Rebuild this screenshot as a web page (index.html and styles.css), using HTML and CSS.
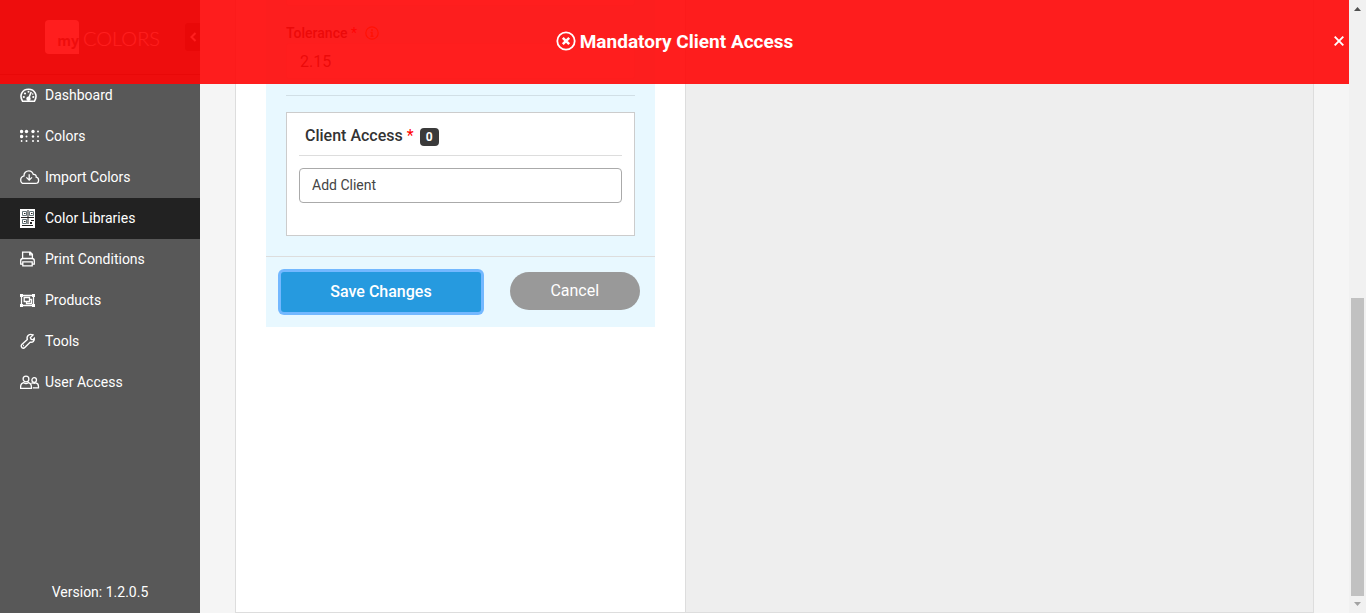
FILE: index.html
```html
<!DOCTYPE html>
<html lang="en">
<head>
<meta charset="utf-8">
<meta name="viewport" content="width=device-width, initial-scale=1">
<title>myCOLORS - Color Libraries</title>
<link rel="stylesheet" href="styles.css">
</head>
<body>
<div class="app">
  <aside class="sidebar">
    <header class="brand">
      <a class="logo" href="#"><span class="logo-box">my</span><span class="logo-name">COLORS</span></a>
      <button class="collapse" type="button" aria-label="Collapse menu">
        <svg width="8" height="10" viewBox="0 0 8 10"><path d="M6.500 1 2.500 5l4 4" fill="none" stroke="#fff" stroke-width="2"/></svg>
      </button>
    </header>
    <nav class="menu">
      <a class="item" href="#">
        <svg class="icon" viewBox="0 0 20 20"><path d="M2.500 16.200C-1 10.500 2 4.200 8.500 4.200s9.500 6.300 6 12z" fill="none" stroke="currentColor" stroke-width="1.600"/><path d="m11.200 7-2.200 5.500" stroke="currentColor" stroke-width="1.600"/><circle cx="8.500" cy="13.800" r="2.200" fill="currentColor"/><g fill="currentColor"><circle cx="8.500" cy="6.800" r="1"/><circle cx="5" cy="8.500" r="1.100"/><circle cx="3.800" cy="12" r="1.100"/><circle cx="13.300" cy="12" r="1.100"/><circle cx="12.700" cy="9" r=".8"/></g></svg>
        Dashboard</a>
      <a class="item" href="#">
        <svg class="icon" viewBox="0 0 20 20"><g fill="currentColor"><circle cx="1.600" cy="5.500" r="1.700"/><circle cx="6.500" cy="5.500" r="1.700"/><circle cx="13" cy="5.500" r="1.700"/><circle cx="18" cy="5.500" r="1"/><circle cx="1.600" cy="10.500" r="1.700"/><circle cx="6.500" cy="10.500" r="1"/><circle cx="13" cy="10.500" r="1.200"/><circle cx="18" cy="10.500" r="1"/><circle cx="1.600" cy="15" r=".9"/><circle cx="6.500" cy="15" r="1"/><circle cx="13" cy="15" r="1"/><circle cx="18" cy="15" r="1.100"/></g></svg>
        Colors</a>
      <a class="item" href="#">
        <svg class="icon" viewBox="0 0 20 20" fill="none" stroke="currentColor" stroke-width="1.300"><path d="M4 16.400h11.300c2 0 3.300-1.500 3.300-3.200 0-1.500-1-2.700-2.400-3 .3-1.700-1-3.100-2.900-2.800C12.600 5.200 11 3.900 8.800 3.900c-2.800 0-5 2-4.800 5C2 9.400.7 10.900.7 12.900c0 2 1.400 3.500 3.300 3.500zM9.200 7.200V13M6.400 10.400l2.800 2.800 2.800-2.800"/></svg>
        Import Colors</a>
      <a class="item active" href="#" aria-current="page">
        <svg class="icon" viewBox="0 0 20 20"><path d="M0 1h15v19H0z" fill="#fff"/><path d="M2.500 3.500h4v4h-4zM9.500 3.500h4v4h-4zM2.500 11.500h4v4h-4z" fill="#fff" stroke="#657579" stroke-width="1"/><path d="M4 5h1.500v1H4zM11 5h1.500v1H11zM4 13h1.500v1H4z" fill="#222"/><path d="M1 9h13v1H1zM7.500 2h1v14h-1zM2 17h11v1H2zM11 12h3v1h-3zM10 14h2v2h-2z" fill="#222"/></svg>
        Color Libraries</a>
      <a class="item" href="#">
        <svg class="icon" viewBox="0 0 20 20" fill="none" stroke="currentColor" stroke-width="1.300"><path d="M2.600 9.500V3.100h7.600l2.200 2.200v4.200M9.700 3.300v2.600h2.600M2.700 15.100H.7v-3.400c0-1.300.9-2.200 2.200-2.200h9.200c1.300 0 2.200.9 2.200 2.200v3.400h-2.200M2.800 12.900h9.400v4H2.800z"/></svg>
        Print Conditions</a>
      <a class="item" href="#">
        <svg class="icon" viewBox="0 0 20 20" fill="none" stroke="currentColor"><path d="M1.500 5.500h12v10h-12zM4.200 7.500h5.300v4H4.200zM9.500 9.500h2v4h-5v-2" stroke-width="1.300"/><path d="M0 4h3v3H0zM12 4h3v3h-3zM0 14h3v3H0zM12 14h3v3h-3z" fill="currentColor" stroke="none"/></svg>
        Products</a>
      <a class="item" href="#">
        <svg class="icon" viewBox="0 0 20 20" fill="none" stroke="currentColor" stroke-width="1.400"><path d="m13 4-2.600 2.600.8 1.800 1.800.4L14.300 7.300c.5 2.600-1.600 4.500-4.200 3.900l-5.300 5.300c-.8.800-2 .8-2.900.1-.9-.9-.9-2.200-.1-3l5.500-5C6.200 5 9.300 2.200 13 4zM3 14.500h.9"/></svg>
        Tools</a>
      <a class="item" href="#">
        <svg class="icon" viewBox="0 0 20 20" fill="none" stroke="currentColor" stroke-width="1.300"><circle cx="6" cy="7" r="2.900"/><path d="M.6 16.400v-1.500c0-2.400 1.200-3.800 3.200-4.200 1.300 1 3.100 1 4.400 0 2 .4 3.200 1.800 3.200 4.200v1.500z"/><circle cx="14.200" cy="8" r="2.300"/><path d="M11.400 11.500c.3-.3.800-.6 1.400-.7 1 .6 1.900.6 2.900 0 1.800.3 2.800 1.600 2.800 3.600v1.400h-5.700"/></svg>
        User Access</a>
    </nav>
    <footer class="version">Version: 1.2.0.5</footer>
  </aside>

  <main class="main">
    <div class="panel">
      <section class="editor">
        <form class="form">
          <div class="fields">
            <input class="text-input previous" type="text" aria-label="Library name">
            <div class="field">
              <div class="label-row">
                <label for="tolerance">Tolerance <span class="required">*</span></label>
                <svg width="14" height="14" viewBox="0 0 14 14"><circle cx="7" cy="7" r="6.200" fill="none" stroke="#ff7b00" stroke-width="1.200"/><path d="M7 3v2M5.500 6.500H7V10M5.500 10.300h3" fill="none" stroke="#ff7b00" stroke-width="1.400"/></svg>
              </div>
              <input class="text-input" id="tolerance" type="text" value="2.15">
            </div>
            <section class="clients">
              <h2 class="clients-title"><label for="client">Client Access <span class="required">*</span></label><span class="count">0</span></h2>
              <input class="client-input" id="client" type="text" placeholder="Add Client">
            </section>
          </div>
          <div class="actions">
            <button class="save" type="submit">Save Changes</button>
            <button class="cancel" type="button">Cancel</button>
          </div>
        </form>
      </section>
      <section class="preview"></section>
    </div>
  </main>

  <div class="scrollbar" aria-hidden="true">
    <svg class="arrow" width="17" height="17" viewBox="0 0 17 17"><path d="M5 11h7L8.500 7z" fill="#505050"/></svg>
    <div class="thumb"></div>
    <svg class="arrow" width="17" height="17" viewBox="0 0 17 17"><path d="M5 6h7l-3.500 4z" fill="#a3a3a3"/></svg>
  </div>

  <div class="alert" role="alert">
    <svg width="20" height="20" viewBox="0 0 20 20" fill="none" stroke="#fff"><circle cx="10" cy="10" r="8.700" stroke-width="1.800"/><path d="m6.800 6.800 6.400 6.400M13.200 6.800l-6.400 6.400" stroke-width="2.500"/></svg>
    <span>Mandatory Client Access</span>
    <button class="dismiss" type="button" aria-label="Close">
      <svg width="10" height="10" viewBox="0 0 10 10"><path d="m.7.700 8.600 8.600M9.300.700.700 9.300" stroke="#fff" stroke-width="1.900"/></svg>
    </button>
  </div>
</div>
</body>
</html>
```
FILE: styles.css
```css
* { box-sizing: border-box; }

body {
  margin: 0;
  font-family: Roboto, "Liberation Sans", sans-serif;
  font-size: 14px;
  color: #333;
  background: #f5f5f5;
}

button, input { font-family: inherit; }
button { padding: 0; border: 0; cursor: pointer; }
svg { display: block; flex: none; }

.app {
  position: relative;
  display: grid;
  grid-template-columns: 200px 1fr 17px;
  height: 100vh;
  overflow: hidden;
}

.sidebar {
  display: flex;
  flex-direction: column;
  background: #585858;
  color: #fff;
}
.brand {
  display: flex;
  align-items: center;
  justify-content: space-between;
  height: 75px;
  padding-left: 45px;
  border-bottom: 1px solid #222;
}
.logo {
  display: flex;
  align-items: center;
  gap: 4px;
  color: #fff;
  text-decoration: none;
}
.logo-box {
  width: 34px;
  height: 34px;
  padding-top: 12px;
  border-radius: 4px 4px 0 4px;
  background: #fff;
  color: #575757;
  font: 700 14px/18px "Open Sans", sans-serif;
  text-align: right;
}
.logo-name {
  padding-top: 2px;
  font: 300 20px/24px Lato, sans-serif;
}
.collapse {
  display: grid;
  place-items: center;
  width: 15px;
  height: 28px;
  border-radius: 3px 0 0 3px;
  background: #222;
}

.item {
  display: flex;
  align-items: center;
  gap: 5px;
  height: 41px;
  padding: 0 0 2px 20px;
  color: #fff;
  text-decoration: none;
}
.item.active { background: #222; }
.icon { width: 20px; height: 20px; }
.version {
  margin-top: auto;
  padding-bottom: 12px;
  line-height: 18px;
  text-align: center;
}

.main {
  display: flex;
  padding: 0 35px;
}
.panel {
  flex: 1;
  display: grid;
  grid-template-columns: 5fr 7fr;
  border: 1px solid #ddd;
  border-top: 0;
  background: #fff;
}
.preview {
  border-left: 1px solid #ddd;
  background: #eee;
}
.editor { padding: 0 30px; }
.form { background: #e8f8ff; }
.fields { padding: 0 20px 20px; }
.text-input {
  display: block;
  width: 100%;
  height: 36px;
  padding: 0 13px;
  border: 1px solid #eee;
  border-radius: 3px;
  background: #fff;
  font-size: 16px;
  color: #333;
}
.text-input.previous { margin-top: -30px; }
.field {
  margin: 18px 0 16px;
  padding-bottom: 16px;
  border-bottom: 1px solid #d1dfe6;
}
.label-row {
  display: flex;
  align-items: center;
  gap: 8px;
  height: 18px;
  margin-bottom: 1px;
  font-weight: 500;
}
.required { color: #f00; font-weight: 400; }

.clients {
  height: 124px;
  padding: 0 12px;
  border: 1px solid #ccc;
  background: #fff;
}
.clients-title {
  display: flex;
  align-items: center;
  gap: 6px;
  height: 43px;
  margin: 0 0 12px;
  padding: 3px 6px 0;
  border-bottom: 1px solid #ddd;
  font-size: 16px;
  font-weight: 500;
}
.count {
  width: 19px;
  margin-top: 3px;
  border-radius: 4px;
  background: #3a3a3a;
  color: #fff;
  font-size: 12px;
  font-weight: 700;
  line-height: 18px;
  text-align: center;
}
.client-input {
  display: block;
  width: 100%;
  height: 35px;
  padding: 0 12px 1px;
  border: 1px solid #aaa;
  border-radius: 4px;
  font-size: 14px;
}
.client-input::placeholder { color: #444; opacity: 1; }

.actions {
  display: flex;
  align-items: flex-start;
  justify-content: space-between;
  padding: 15px;
  border-top: 1px solid #ddd;
}
.save {
  width: 200px;
  height: 40px;
  padding-bottom: 2px;
  border-radius: 3px;
  background: #269adf;
  box-shadow: 0 0 0 3px #73b8ff;
  color: #fff;
  font-size: 16px;
  font-weight: 500;
}
.cancel {
  width: 130px;
  height: 38px;
  padding-bottom: 2px;
  border-radius: 19px;
  background: #999;
  color: #fff;
  font-size: 16px;
}

.scrollbar {
  display: flex;
  flex-direction: column;
  background: #f1f1f1;
}
.thumb {
  flex: 1;
  margin: 281px 2px 0;
  background: #c1c1c1;
}

.alert {
  position: absolute;
  top: 0;
  left: 0;
  right: 17px;
  display: flex;
  align-items: center;
  justify-content: center;
  gap: 4px;
  height: 84px;
  padding-bottom: 2px;
  background: rgba(255, 15, 15, 0.93);
  background: rgba(255, 5, 5, 0.9);
  color: #fff;
  font-size: 19px;
  font-weight: 700;
}
.dismiss {
  position: absolute;
  right: 5px;
  background: none;
}
```
